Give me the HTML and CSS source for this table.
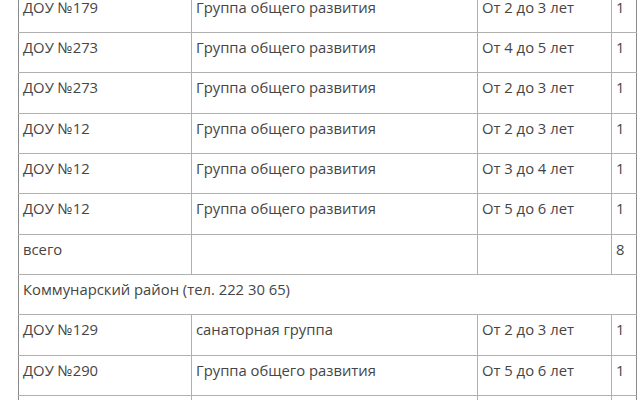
FILE: index.html
```html
<!DOCTYPE html>
<html lang="ru">
<head>
<meta charset="utf-8">
<link rel="stylesheet" href="styles.css">
</head>
<body>
<table class="groups">
  <colgroup>
    <col class="c-name"><col class="c-type"><col class="c-age"><col class="c-num">
  </colgroup>
  <tbody>
    <tr><td>ДОУ №179</td><td>Группа общего развития</td><td>От 2 до 3 лет</td><td>1</td></tr>
    <tr><td>ДОУ №273</td><td>Группа общего развития</td><td>От 4 до 5 лет</td><td>1</td></tr>
    <tr><td>ДОУ №273</td><td>Группа общего развития</td><td>От 2 до 3 лет</td><td>1</td></tr>
    <tr><td>ДОУ №12</td><td>Группа общего развития</td><td>От 2 до 3 лет</td><td>1</td></tr>
    <tr><td>ДОУ №12</td><td>Группа общего развития</td><td>От 3 до 4 лет</td><td>1</td></tr>
    <tr><td>ДОУ №12</td><td>Группа общего развития</td><td>От 5 до 6 лет</td><td>1</td></tr>
    <tr><td>всего</td><td></td><td></td><td>8</td></tr>
    <tr><td colspan="4">Коммунарский район (тел. 222 30 65)</td></tr>
    <tr><td>ДОУ №129</td><td>санаторная группа</td><td>От 2 до 3 лет</td><td>1</td></tr>
    <tr><td>ДОУ №290</td><td>Группа общего развития</td><td>От 5 до 6 лет</td><td>1</td></tr>
    <tr><td>ДОУ №290</td><td>Группа общего развития</td><td>От 3 до 4 лет</td><td>1</td></tr>
  </tbody>
</table>
</body>
</html>
```

FILE: styles.css
```css
html, body {
  margin: 0;
  padding: 0;
  background: #ffffff;
}

body {
  font-family: "Open Sans", "Liberation Sans", sans-serif;
  font-size: 14.8px;
  color: #454545;
  overflow: hidden;
}

.groups {
  border-collapse: collapse;
  table-layout: fixed;
  width: 618px;
  margin: -8.33px 0 0 18px;
  border-left: 1px solid #8a8a8a;
  border-right: 1px solid #8a8a8a;
}

.c-name { width: 173px; }
.c-type { width: 286px; }
.c-age  { width: 134px; }
.c-num  { width: 25px; }

.groups td {
  border: 1px solid #b0b0b0;
  height: 40.33px;
  box-sizing: border-box;
  padding: 4px 4px 0 4px;
  vertical-align: top;
  line-height: 20px;
  white-space: nowrap;
  overflow: hidden;
}

.groups td:first-child { border-left-color: #8a8a8a; }
.groups td:last-child { border-right-color: #8a8a8a; }
```
